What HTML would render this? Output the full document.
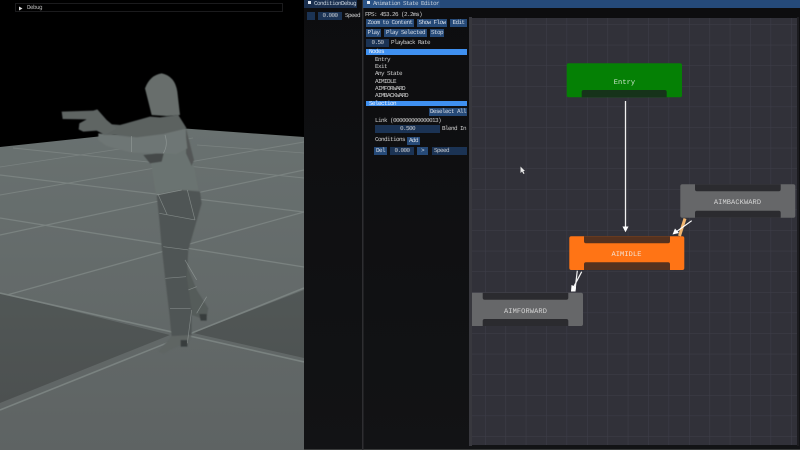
<!DOCTYPE html>
<html><head><meta charset="utf-8">
<style>
html,body{margin:0;padding:0;background:#000;width:800px;height:450px;overflow:hidden}
#r{position:relative;width:800px;height:450px;overflow:hidden;font-family:"Liberation Mono",monospace;font-size:6px;letter-spacing:-.6px;line-height:6px;color:#d8d8d8;filter:blur(.3px);text-rendering:geometricPrecision}
#r div{position:absolute;white-space:pre}
.b{background:#264a78;text-align:center;line-height:8px;height:8px;color:#d5dce6}
.f{background:#1b3354;text-align:center;line-height:8px;height:8px;color:#c8ccd2}
.h{background:#3f90f0;left:366px;width:101px;height:5.5px;line-height:5.5px;padding-left:3px;box-sizing:border-box;color:#e8f0fa}
.t{color:#d0d0d0}
#r div.n{font-size:7px;letter-spacing:.1px;width:115px;text-align:center;line-height:6px}
svg{position:absolute;left:0;top:0}
</style></head><body><div id="r">
<svg width="800" height="450" viewBox="0 0 800 450">
<defs>
<linearGradient id="fl" x1="0" y1="128" x2="0" y2="450" gradientUnits="userSpaceOnUse"><stop offset="0" stop-color="#697170"/><stop offset="1" stop-color="#5e6363"/></linearGradient>
<linearGradient id="dk" x1="0" y1="290" x2="0" y2="405" gradientUnits="userSpaceOnUse"><stop offset="0" stop-color="#515756"/><stop offset="1" stop-color="#4c5050"/></linearGradient>
<linearGradient id="pn" x1="0" y1="0" x2="0" y2="450" gradientUnits="userSpaceOnUse"><stop offset="0" stop-color="#0d0d0f"/><stop offset="1" stop-color="#121315"/></linearGradient>
<pattern id="g" x="485" y="395" width="20.4" height="20.6" patternUnits="userSpaceOnUse"><path d="M0 0H20.400M0 0V20.600" stroke="#3e3e49" stroke-width="1" fill="none"/></pattern>
<clipPath id="vp"><rect width="304" height="450"/></clipPath>
<clipPath id="cv"><rect x="472" y="18" width="325" height="427"/></clipPath>
<filter id="bl" x="-5%" y="-5%" width="110%" height="110%"><feGaussianBlur stdDeviation="1.5"/></filter>
</defs>
<rect x="304" y="0" width="496" height="450" fill="url(#pn)"/>
<rect x="304" y="449" width="496" height="1" fill="#3a3c3c"/>
<rect x="362" y="0" width="1.500" height="450" fill="#2e2e31"/>
<rect x="469" y="17" width="3" height="429" fill="#38383e"/>
<rect x="797" y="17" width="2" height="429" fill="#1c1c20"/>
<rect x="472" y="18" width="325" height="427" fill="#313139"/>
<rect x="472" y="18" width="325" height="427" fill="url(#g)"/>

<g clip-path="url(#vp)">
<polygon points="0,147 178,128 304,137 304,450 0,450" fill="url(#fl)"/>
<polygon points="0,293 170,335 0,403" fill="url(#dk)"/>
<polygon points="193,333 304,290 304,358" fill="url(#dk)"/>
<g stroke="#7a8280" fill="none" stroke-width="1.200">
<path d="M0 410L304 288" stroke-width="1.600"/>
<path d="M7 295L304 212" stroke-width="1.300"/>
<path d="M0 235L304 170"/>
<path d="M0 195L304 142" stroke-width=".9"/>
<path d="M0 167L193 138" stroke-width=".7"/>
<path d="M0 293L304 362" stroke-width="1.600"/>
<path d="M0 218L304 267" stroke-width="1.300"/>
<path d="M0 175L304 212"/>
<path d="M13 148L304 178" stroke-width=".9"/>
<path d="M197 145L304 153" stroke-width=".7"/>
</g>
<g transform="translate(50 60) scale(.3333)">
<g filter="url(#bl)">
<path d="M400 590L440 690 475 745 468 783 440 770 425 765 415 690Z" fill="#555b5a"/>
<path d="M320 405L395 390 450 395 455 430 432 510 415 570 410 650 425 750 425 825 365 830 358 760 345 650 335 560 328 480Z" fill="#505554"/>
<path d="M365 828L425 825 412 860 395 855 365 868 340 882 325 875Z" fill="#5f6564"/>
<path d="M392 840h20v20h-20zM448 762h22v20h-18z" fill="#383c3c"/>
<path d="M300 275L410 265 430 310 445 390 380 390 318 402 305 320Z" fill="#6b7371"/>
<path d="M408 205L432 300 425 318 408 280Z" fill="#525756"/>
<path d="M280 285L342 278 335 305 300 310Z" fill="#454949"/>
<path d="M145 220L240 232 340 222 405 205 412 265 380 282 245 278 170 258 145 240Z" fill="#6e7674"/>
<path d="M150 190L210 195 300 170 330 172 385 165 410 205 340 222 260 232 200 225 160 225Z" fill="#5c6261"/>
<path d="M285 85Q300 45 335 40 375 48 382 95L390 165 350 168 305 165 295 125Z" fill="#676e6c"/>
<path d="M35 155L130 152 142 148 170 180 200 205 165 225 140 212 100 215 86 208 88 190 110 178 38 177Z" fill="#5f6564"/>
</g>
<g stroke="#a9b1ae" fill="none" stroke-width="2" opacity=".55">
<path d="M245 228V276M345 225Q355 255 340 280"/>
<path d="M320 405L395 390M412 390L435 480M328 460L435 480M340 560L415 570M346 655L408 650M360 745L422 745M425 750L412 850M325 405L352 465M405 600L440 660M415 690L440 680M440 760L470 710"/>
</g>
</g>
</g>

<g clip-path="url(#cv)">
<rect x="566.700" y="63.300" width="115.300" height="34" rx="2" fill="#058005"/>
<path d="M581.700 97.300V92a2 2 0 0 1 2-2h81a2 2 0 0 1 2 2v5.300z" fill="#16331a"/>
<rect x="569.300" y="236.300" width="115" height="33.700" rx="2" fill="#ff7415"/>
<path d="M584 236.300h86v5a2 2 0 0 1-2 2h-82a2 2 0 0 1-2-2zM584 270v-5.700a2 2 0 0 1 2-2h82a2 2 0 0 1 2 2v5.700z" fill="#55321f"/>
<rect x="680.300" y="184.300" width="115" height="33.400" rx="2" fill="#666769"/>
<path d="M695 184.300h85.700v5a2 2 0 0 1-2 2h-81.700a2 2 0 0 1-2-2zM695 217.700v-5a2 2 0 0 1 2-2h81.700a2 2 0 0 1 2 2v5z" fill="#2b2b2f"/>
<rect x="468" y="292.700" width="115" height="33.300" rx="2" fill="#666769"/>
<path d="M482.700 292.700h85.600v5a2 2 0 0 1-2 2h-81.600a2 2 0 0 1-2-2zM482.700 326v-5a2 2 0 0 1 2-2h81.600a2 2 0 0 1 2 2v5z" fill="#2b2b2f"/>
<path d="M625.500 101V228" stroke="#f0f0f0" stroke-width="1.300"/>
<path d="M622.500 226.500h6l-3 5.800z" fill="#fff"/>
<path d="M685 218.500L679.500 236" stroke="#f2b670" stroke-width="3"/>
<path d="M691.700 220.700L676 232" stroke="#fff" stroke-width="1.200"/>
<path d="M672.500 234.500L675 228.500 679 233z" fill="#fff"/>
<path d="M581.700 271.700L571.700 290.700M577.300 270.700L575 290" stroke="#f4f4f4" stroke-width="1.200"/>
<path d="M571 291.500L571.500 285 576 287 575.500 291.500z" fill="#fff"/>
<path d="M520.500 166.500V173L522 171.500 523.500 174 524.500 173.500 523.300 171H525z" fill="#e8e8e8"/>
</g>
<path d="M19 6.500V10.500L22.500 8.500z" fill="#ddd"/>
</svg>

<div style="left:15px;top:3px;width:268px;height:9px;border:1px solid #1b1b1d;box-sizing:border-box"></div>
<div style="left:27px;top:5px;color:#b8b8b8">Debug</div>

<div style="left:304px;top:0;width:53px;height:8px;background:#1a2f4e"></div>
<div style="left:363px;top:0;width:437px;height:8px;background:#254a7a"></div>
<div style="left:363px;top:0;width:77px;height:8px;background:#2a5285"></div>
<div style="left:307.500px;top:1px;width:3px;height:3px;background:#e0e6f0"></div>
<div style="left:366.500px;top:1px;width:3px;height:3px;background:#e0e6f0"></div>
<div style="left:314px;top:1px;color:#c6d0dc">ConditionDebug</div>
<div style="left:373px;top:1px;color:#c6d0dc">Animation State Editor</div>

<div class="f" style="left:307px;top:12px;width:8px"></div>
<div class="f" style="left:318px;top:12px;width:24px">0.000</div>
<div class="t" style="left:345px;top:13px">Speed</div>

<div class="t" style="left:365px;top:11.500px">FPS: 453.26 (2.2ms)</div>
<div class="b" style="left:366px;top:19px;width:48px">Zoom to Content</div>
<div class="b" style="left:417px;top:19px;width:30px">Show Flow</div>
<div class="b" style="left:450px;top:19px;width:17px">Edit</div>
<div class="b" style="left:366px;top:29px;width:15px">Play</div>
<div class="b" style="left:384px;top:29px;width:43px">Play Selected</div>
<div class="b" style="left:430px;top:29px;width:14px">Stop</div>
<div class="f" style="left:366px;top:39px;width:23px">0.50</div>
<div class="t" style="left:391px;top:40px">Playback Rate</div>
<div class="h" style="top:49px">Nodes</div>
<div class="t" style="left:375px;top:56.500px">Entry</div>
<div class="t" style="left:375px;top:63.800px">Exit</div>
<div class="t" style="left:375px;top:71.200px">Any State</div>
<div class="t" style="left:375px;top:78.500px">AIMIDLE</div>
<div class="t" style="left:375px;top:85.800px">AIMFORWARD</div>
<div class="t" style="left:375px;top:93.200px">AIMBACKWARD</div>
<div class="h" style="top:100.500px">Selection</div>
<div class="b" style="left:429px;top:108px;width:38px">Deselect All</div>
<div class="t" style="left:375px;top:117.500px">Link (000000000000013)</div>
<div class="f" style="left:375px;top:125px;width:65px">0.500</div>
<div class="t" style="left:442px;top:126px">Blend In</div>
<div class="t" style="left:375px;top:137px">Conditions</div>
<div class="b" style="left:407px;top:136.500px;width:13px">Add</div>
<div class="b" style="left:374px;top:147px;width:13px">Del</div>
<div class="f" style="left:390px;top:147px;width:24px">0.000</div>
<div class="b" style="left:417px;top:147px;width:11px">&gt;</div>
<div class="f" style="left:432px;top:147px;width:35px;text-align:left;padding-left:2px;box-sizing:border-box">Speed</div>

<div class="n" style="left:567px;top:80px;color:#cfe6cf">Entry</div>
<div class="n" style="left:569px;top:252px;color:#f5e3d5">AIMIDLE</div>
<div class="n" style="left:680px;top:200px;color:#d5d5d5">AIMBACKWARD</div>
<div class="n" style="left:468px;top:309px;color:#d5d5d5">AIMFORWARD</div>
</div></body></html>
